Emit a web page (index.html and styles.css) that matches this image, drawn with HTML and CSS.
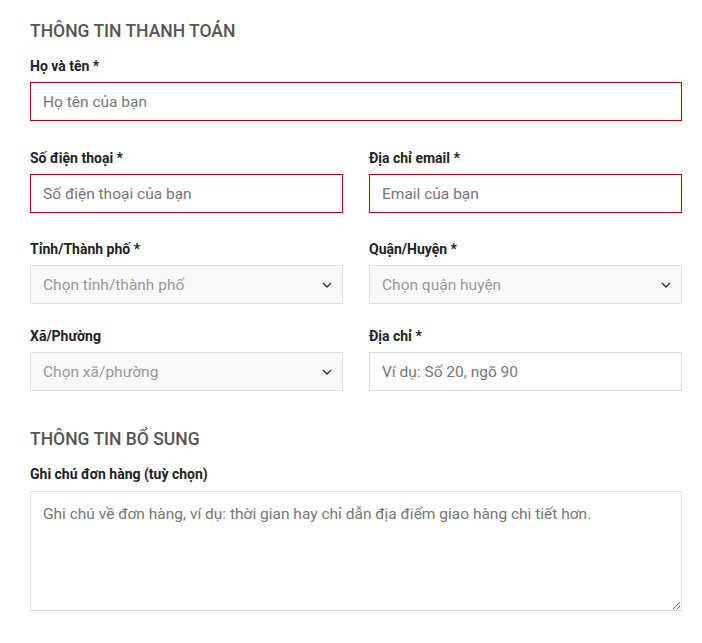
FILE: index.html
```html
<!DOCTYPE html>
<html lang="vi">
<head>
<meta charset="utf-8">
<link rel="stylesheet" href="styles.css">
</head>
<body>
<form class="checkout">
  <h3 class="section-title">THÔNG TIN THANH TOÁN</h3>
  <div class="field">
    <label class="label">Họ và tên *</label>
    <input class="input error" type="text" placeholder="Họ tên của bạn">
  </div>
  <div class="row row-tight1">
    <div class="field">
      <label class="label">Số điện thoại *</label>
      <input class="input error" type="text" placeholder="Số điện thoại của bạn">
    </div>
    <div class="field">
      <label class="label">Địa chỉ email *</label>
      <input class="input error" type="text" placeholder="Email của bạn">
    </div>
  </div>
  <div class="row row-tight2">
    <div class="field">
      <label class="label">Tỉnh/Thành phố *</label>
      <div class="select">
        <span>Chọn tỉnh/thành phố</span>
        <svg class="chev" width="10" height="6" viewBox="0 0 10 6"><path d="M1 1l4 4 4-4" fill="none" stroke="#333" stroke-width="1.4"/></svg>
      </div>
    </div>
    <div class="field">
      <label class="label">Quận/Huyện *</label>
      <div class="select">
        <span>Chọn quận huyện</span>
        <svg class="chev" width="10" height="6" viewBox="0 0 10 6"><path d="M1 1l4 4 4-4" fill="none" stroke="#333" stroke-width="1.4"/></svg>
      </div>
    </div>
  </div>
  <div class="row">
    <div class="field">
      <label class="label">Xã/Phường</label>
      <div class="select">
        <span>Chọn xã/phường</span>
        <svg class="chev" width="10" height="6" viewBox="0 0 10 6"><path d="M1 1l4 4 4-4" fill="none" stroke="#333" stroke-width="1.4"/></svg>
      </div>
    </div>
    <div class="field">
      <label class="label">Địa chỉ *</label>
      <input class="input" type="text" placeholder="Ví dụ: Số 20, ngõ 90">
    </div>
  </div>
  <h3 class="section-title second">THÔNG TIN BỔ SUNG</h3>
  <div class="field">
    <label class="label">Ghi chú đơn hàng (tuỳ chọn)</label>
    <textarea class="textarea" placeholder="Ghi chú về đơn hàng, ví dụ: thời gian hay chỉ dẫn địa điểm giao hàng chi tiết hơn."></textarea>
  </div>
</form>
</body>
</html>
```
FILE: styles.css
```css
* { box-sizing: border-box; }
html, body { margin: 0; background: #fff; }
body {
  font-family: Roboto, "Liberation Sans", sans-serif;
  color: #222;
}
.checkout {
  padding: 19px 20px 0 30px;
  width: 702px;
}
.section-title {
  margin: 0 0 13px;
  font-size: 17.5px;
  line-height: 24px;
  font-weight: 500;
  color: #555;
}
.section-title.second { margin-top: 9px; }
.field {
  display: flex;
  flex-direction: column;
  margin-bottom: 27px;
  min-width: 0;
}
.row-tight1 .field { margin-bottom: 26px; }
.row-tight2 .field { margin-bottom: 22px; }
.label {
  font-size: 14px;
  line-height: 20px;
  font-weight: 700;
  color: #222;
  margin-bottom: 6px;
}
.row {
  display: grid;
  grid-template-columns: 1fr 1fr;
  column-gap: 26px;
}
.input, .select, .textarea {
  width: 100%;
  height: 39px;
  border: 1px solid #ddd;
  background: #fff;
  font-family: Roboto, "Liberation Sans", sans-serif;
  font-size: 15.5px;
  color: #222;
  padding: 0 12px;
  margin: 0;
  outline: none;
  box-shadow: inset 0 1px 2px rgba(0,0,0,0.05);
}
.input::placeholder, .textarea::placeholder { color: #777; }
.input.error { border: 1px solid #b20000; box-shadow: none; }
.select {
  display: flex;
  align-items: center;
  justify-content: space-between;
  background: #f9f9f9;
  color: #999;
  border-color: #e3e3e3;
  box-shadow: none;
  padding-right: 10px;
}
.chev { display: block; }
.textarea {
  height: 120px;
  padding: 10px 12px;
  margin-top: 1px;
  resize: vertical;
  line-height: 24px;
  display: block;
}
```
